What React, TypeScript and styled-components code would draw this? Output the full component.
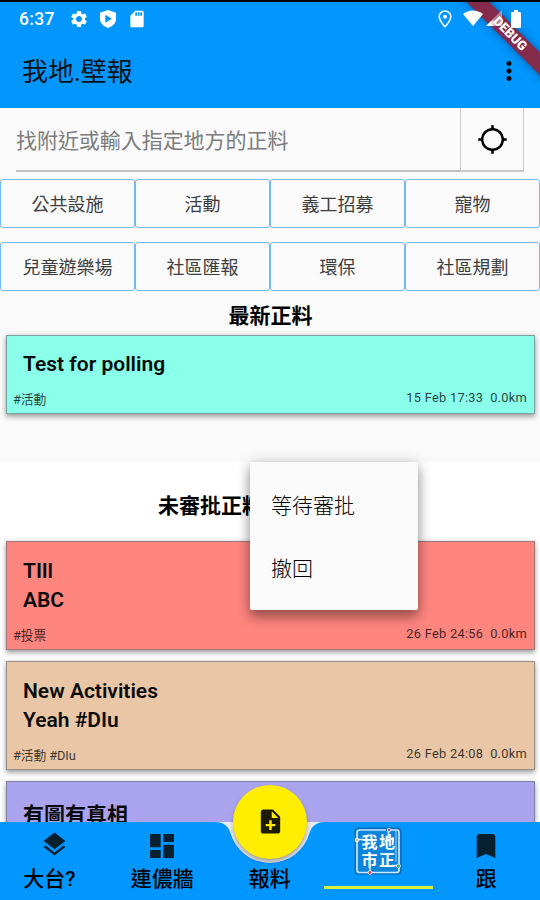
import React from "react";
import styled, { createGlobalStyle } from "styled-components";
import {
  MdSettings, MdSdCard, MdLayers, MdDashboard, MdBookmark, MdNoteAdd,
  MdMoreVert, MdLocationSearching,
} from "react-icons/md";

const GlobalStyle = createGlobalStyle`
  * { box-sizing: border-box; }
  body { margin: 0; background: #fafafa; }
`;

const Screen = styled.div`
  position: relative;
  width: 540px;
  height: 900px;
  overflow: hidden;
  display: flex;
  flex-direction: column;
  background: #fafafa;
  border-top: 2px solid #000;
  font-family: Roboto, "Noto Sans CJK TC", sans-serif;
  color: #101010;
`;

const Header = styled.header`
  flex: 0 0 105.5px;
  background: #0296ff;
`;

const StatusBar = styled.div`
  position: relative;
  z-index: 2;
  display: flex;
  align-items: center;
  height: 33px;
  padding: 0 19px 0 19px;
  color: #fff;
`;

const Clock = styled.span`
  width: 50px;
  font-size: 17.5px;
  font-weight: 500;
  letter-spacing: 0.35px;
`;

const StatusGroup = styled.div<{ $gap: number; $push?: boolean }>`
  display: flex;
  align-items: center;
  gap: ${(p) => p.$gap}px;
  margin-left: ${(p) => (p.$push ? "auto" : "0")};
  svg { display: block; }
`;

const TitleBar = styled.div`
  display: flex;
  align-items: center;
  justify-content: space-between;
  height: 72px;
  padding: 0 17.5px 0 22px;
`;

const AppTitle = styled.h1`
  margin: 0;
  padding-top: 2px;
  font-size: 26px;
  font-weight: 400;
  line-height: 36px;
`;

const MenuButton = styled.button`
  display: flex;
  padding: 0;
  border: 0;
  background: none;
  color: #000;
  margin-right: -1px;
`;

const DebugRibbon = styled.div`
  position: absolute;
  z-index: 1;
  top: 24px;
  left: 440px;
  width: 140px;
  height: 16px;
  transform: rotate(45deg);
  background: #842b4c;
  box-shadow: 0 0 8px rgba(0, 0, 0, 0.4);
  color: #fff;
  font-size: 13px;
  font-weight: 900;
  line-height: 16px;
  text-align: center;
`;

const Content = styled.main`
  flex: 1;
  min-height: 0;
  overflow: hidden;
  display: flex;
  flex-direction: column;
`;

const SearchRow = styled.div`
  flex: 0 0 64.5px;
  display: flex;
  margin: 0 16px 7px;
`;

const SearchField = styled.div`
  flex: 1;
  display: flex;
  align-items: center;
  border-bottom: 2px solid #bfbfbf;
  padding-top: 5px;
  color: #7c7c7c;
  font-size: 21px;
  line-height: 30px;
  letter-spacing: -0.05px;
`;

const LocateButton = styled.button`
  display: flex;
  align-items: center;
  justify-content: center;
  width: 64px;
  padding: 1px 0 0;
  background: none;
  border: 1px solid #cacaca;
  border-width: 0 1.5px 2px 1px;
  color: #000;
`;

const ChipGrid = styled.div`
  flex: none;
  display: grid;
  grid-template-columns: repeat(4, 1fr);
  row-gap: 14px;
`;

const Chip = styled.button`
  height: 49px;
  padding: 2px 0 0;
  border: 1px solid #74b7f6;
  border-radius: 3px;
  background: #fafafa;
  color: #3d3d3d;
  font: 400 18px/26px Roboto, "Noto Sans CJK TC", sans-serif;
`;

const LatestSection = styled.section`
  flex: 0 0 171px;
  padding: 0 5px 0 6px;
`;

const PendingSection = styled.section`
  flex: none;
  display: flex;
  flex-direction: column;
  gap: 11px;
  padding: 0 5px 0 6px;
  background: #fff;
`;

const SectionTitle = styled.h2<{ $pending?: boolean }>`
  margin: 0;
  font-size: 21px;
  font-weight: 700;
  color: #000;
  height: ${(p) => (p.$pending ? "67.5px" : "44px")};
  line-height: ${(p) => (p.$pending ? "89px" : "51px")};
  padding-left: ${(p) => (p.$pending ? "152px" : "0")};
  text-align: ${(p) => (p.$pending ? "left" : "center")};
`;

const CardBox = styled.article<{ $color: string; $height: number; $inset: number }>`
  display: flex;
  flex-direction: column;
  justify-content: space-between;
  height: ${(p) => p.$height}px;
  padding: ${(p) => p.$inset}px 7px 2px 6px;
  background: ${(p) => p.$color};
  border: 1px solid rgba(110, 110, 120, 0.65);
  box-shadow: 0 3px 5px rgba(0, 0, 0, 0.32), 0 0 5px rgba(0, 0, 0, 0.12);
`;

const CardTitle = styled.div`
  padding-left: 10px;
  font-size: 21px;
  font-weight: 600;
  line-height: 29.5px;
  color: #0b0b0b;
  white-space: pre;
`;

const CardMeta = styled.div`
  display: flex;
  justify-content: space-between;
  align-items: flex-start;
  font-size: 12.8px;
  line-height: 22px;
  color: rgba(0, 0, 0, 0.76);
  white-space: pre;
`;

const Tags = styled.span`
  padding-top: 2px;
  letter-spacing: -0.1px;
`;

const Stamp = styled.span`
  letter-spacing: 0.28px;
`;

const PopupMenu = styled.div`
  position: absolute;
  top: 460px;
  left: 250px;
  width: 168px;
  height: 148px;
  padding: 13px 0;
  border-radius: 2px;
  background: #fafafa;
  box-shadow: 0 8px 12px rgba(0, 0, 0, 0.3), 0 1px 14px rgba(0, 0, 0, 0.24);
`;

const PopupItem = styled.div`
  height: 63px;
  padding: 0 21px;
  font-size: 21px;
  font-weight: 300;
  line-height: 63px;
  color: #000;
`;

const BottomNav = styled.nav`
  position: relative;
  flex: 0 0 78.5px;
  display: grid;
  grid-template-columns: repeat(5, 1fr);
  padding-left: 1px;
  background: #0296ff;
`;

const Notch = styled.svg`
  position: absolute;
  top: 0;
  left: 215px;
`;

const AddButton = styled.button`
  position: absolute;
  top: -37px;
  left: 233px;
  display: flex;
  align-items: center;
  justify-content: center;
  width: 74px;
  height: 74px;
  padding: 0;
  border: 0;
  border-radius: 50%;
  background: #ffee00;
  color: #1c1a00;
  box-shadow: 0 3px 4px rgba(0, 0, 0, 0.32);
`;

const NavItem = styled.div`
  display: flex;
  flex-direction: column;
  align-items: center;
  justify-content: space-between;
  padding: 8px 0 6px;
  color: #06202f;
`;

const NavLabel = styled.span<{ $trail?: number }>`
  margin-top: auto;
  padding-right: ${(p) => p.$trail ?? 0}px;
  font-size: 21px;
  font-weight: 500;
  line-height: 30px;
  color: #000;
`;

const ActiveItem = styled.div`
  display: flex;
  flex-direction: column;
  align-items: center;
  justify-content: space-between;
  padding: 2px 0 11px;
`;

const ActiveLine = styled.div`
  width: 109px;
  height: 3px;
  background: #d8f13c;
`;

const ShieldIcon = () => (
  <svg width="18" height="20" viewBox="0 0 18 20">
    <path d="M9 1 17 3.8V10c0 4.2-3.4 7.4-8 9-4.6-1.6-8-4.8-8-9V3.8z" fill="#fff" />
    <path d="M6.3 5.8v8L12.8 9.8z" fill="#0296ff" />
  </svg>
);

const PinIcon = () => (
  <svg width="14" height="18" viewBox="0 0 14 18">
    <path d="M7 1C3.8 1 1.2 3.5 1.2 6.6 1.2 10.6 7 16.8 7 16.8s5.8-6.2 5.8-10.2C12.8 3.5 10.2 1 7 1z" fill="none" stroke="#fff" strokeWidth="1.5" />
    <circle cx="7" cy="6.7" r="2" fill="#fff" />
  </svg>
);

const WifiIcon = () => (
  <svg width="20" height="17" viewBox="0 0 20 17">
    <path d="M0 4C6-.8 14-.8 20 4L10 16z" fill="#fff" />
  </svg>
);

const SignalIcon = () => (
  <svg width="17" height="17" viewBox="0 0 17 17">
    <defs>
      <linearGradient id="signal-fade" x1="0" x2="1" y1="1" y2="0.6">
        <stop offset="0.3" stopColor="#fff" />
        <stop offset="0.6" stopColor="#fff" stopOpacity="0.4" />
      </linearGradient>
    </defs>
    <path d="M0 16 16 0v16z" fill="url(#signal-fade)" />
  </svg>
);

const BatteryIcon = () => (
  <svg width="10" height="18" viewBox="0 0 10 18">
    <path d="M3 0h4v2H9q1 0 1 1v14q0 1-1 1H1q-1 0-1-1V3q0-1 1-1h2z" fill="#fff" />
  </svg>
);

const SealLogo = () => (
  <svg width="54" height="54" viewBox="0 0 54 54">
    <rect x="4.5" y="4.5" width="45" height="45" rx="3" fill="#0d84da" stroke="#0a72c4" strokeWidth="2.5" />
    <path d="M35 6H8.5Q6 6 6 8.5V46q0 2.5 2.5 2.5H45.5q2.5 0 2.5-2.5V8.5Q48 6 45.5 6H40M37.5 6v8M6 15.5H13M19 48.5V40M48 41.5H41" fill="none" stroke="#c9e9ff" strokeWidth="1.7" />
    <path d="M45 6V38" fill="none" stroke="#9fd4fb" strokeWidth="1" />
    <g fill="#fff" fontFamily='"Noto Sans CJK TC", sans-serif' fontWeight="700" fontSize="16" textAnchor="middle">
      <text x="18.5" y="24">我</text>
      <text x="36" y="24">地</text>
      <text x="18.5" y="42">市</text>
      <text x="36" y="42">正</text>
    </g>
    <circle cx="38" cy="6" r="1.7" fill="#7755a8" stroke="#fff" strokeWidth=".8" />
    <circle cx="6" cy="16" r="1.9" fill="#efc080" stroke="#fff" strokeWidth=".8" />
    <circle cx="19" cy="48.5" r="1.9" fill="#d93656" stroke="#fff" strokeWidth=".8" />
    <circle cx="47.5" cy="42" r="1.9" fill="#25a85a" stroke="#fff" strokeWidth=".8" />
  </svg>
);

interface CardProps {
  color: string;
  height: number;
  title: string;
  inset?: number;
  tags?: string;
  stamp?: string;
}

const Card = ({ color, height, title, inset = 15, tags, stamp }: CardProps) => (
  <CardBox $color={color} $height={height} $inset={inset}>
    <CardTitle>{title}</CardTitle>
    <CardMeta>
      <Tags>{tags}</Tags>
      <Stamp>{stamp}</Stamp>
    </CardMeta>
  </CardBox>
);

const categories = ["公共設施", "活動", "義工招募", "寵物", "兒童遊樂場", "社區匯報", "環保", "社區規劃"];

const pending: CardProps[] = [
  { color: "#ff857f", height: 109, title: "TIll\nABC", tags: "#投票", stamp: "26 Feb 24:56  0.0km" },
  { color: "#e9c7a6", height: 109, title: "New Activities\nYeah #DIu", tags: "#活動 #DIu", stamp: "26 Feb 24:08  0.0km" },
  { color: "#aaa4ee", height: 109, title: "有圖有真相", inset: 19 },
];

export default function App() {
  return (
    <Screen>
      <GlobalStyle />
      <Header>
        <StatusBar>
          <Clock>6:37</Clock>
          <StatusGroup $gap={10}>
            <MdSettings size={20} />
            <ShieldIcon />
            <MdSdCard size={20} />
          </StatusGroup>
          <StatusGroup $gap={11} $push>
            <PinIcon />
            <StatusGroup $gap={3}>
              <WifiIcon />
              <StatusGroup $gap={8}>
                <SignalIcon />
                <BatteryIcon />
              </StatusGroup>
            </StatusGroup>
          </StatusGroup>
        </StatusBar>
        <TitleBar>
          <AppTitle>我地.壁報</AppTitle>
          <MenuButton aria-label="選單"><MdMoreVert size={30} /></MenuButton>
        </TitleBar>
      </Header>

      <Content>
        <SearchRow>
          <SearchField>找附近或輸入指定地方的正料</SearchField>
          <LocateButton aria-label="定位"><MdLocationSearching size={31} /></LocateButton>
        </SearchRow>
        <ChipGrid>
          {categories.map((c) => <Chip key={c}>{c}</Chip>)}
        </ChipGrid>
        <LatestSection>
          <SectionTitle>最新正料</SectionTitle>
          <Card color="#8affe9" height={79} inset={14} title="Test for polling" tags="#活動" stamp="15 Feb 17:33  0.0km" />
        </LatestSection>
        <PendingSection>
          <SectionTitle $pending>未審批正料</SectionTitle>
          {pending.map((p) => <Card key={p.title} {...p} />)}
        </PendingSection>
      </Content>

      <BottomNav>
        <Notch width="110" height="42" viewBox="0 0 110 42">
          <path d="M0 0C9 0 13 4 15.5 11A41 41 0 0 0 94.5 11C97 4 101 0 110 0z" fill="#ececec" />
        </Notch>
        <NavItem><MdLayers size={29} /><NavLabel $trail={11}>大台?</NavLabel></NavItem>
        <NavItem><MdDashboard size={32} /><NavLabel>連儂牆</NavLabel></NavItem>
        <NavItem><NavLabel>報料</NavLabel></NavItem>
        <ActiveItem><SealLogo /><ActiveLine /></ActiveItem>
        <NavItem><MdBookmark size={32} /><NavLabel>跟</NavLabel></NavItem>
        <AddButton aria-label="新增"><MdNoteAdd size={29} /></AddButton>
      </BottomNav>

      <PopupMenu>
        <PopupItem>等待審批</PopupItem>
        <PopupItem>撤回</PopupItem>
      </PopupMenu>
      <DebugRibbon>DEBUG</DebugRibbon>
    </Screen>
  );
}
